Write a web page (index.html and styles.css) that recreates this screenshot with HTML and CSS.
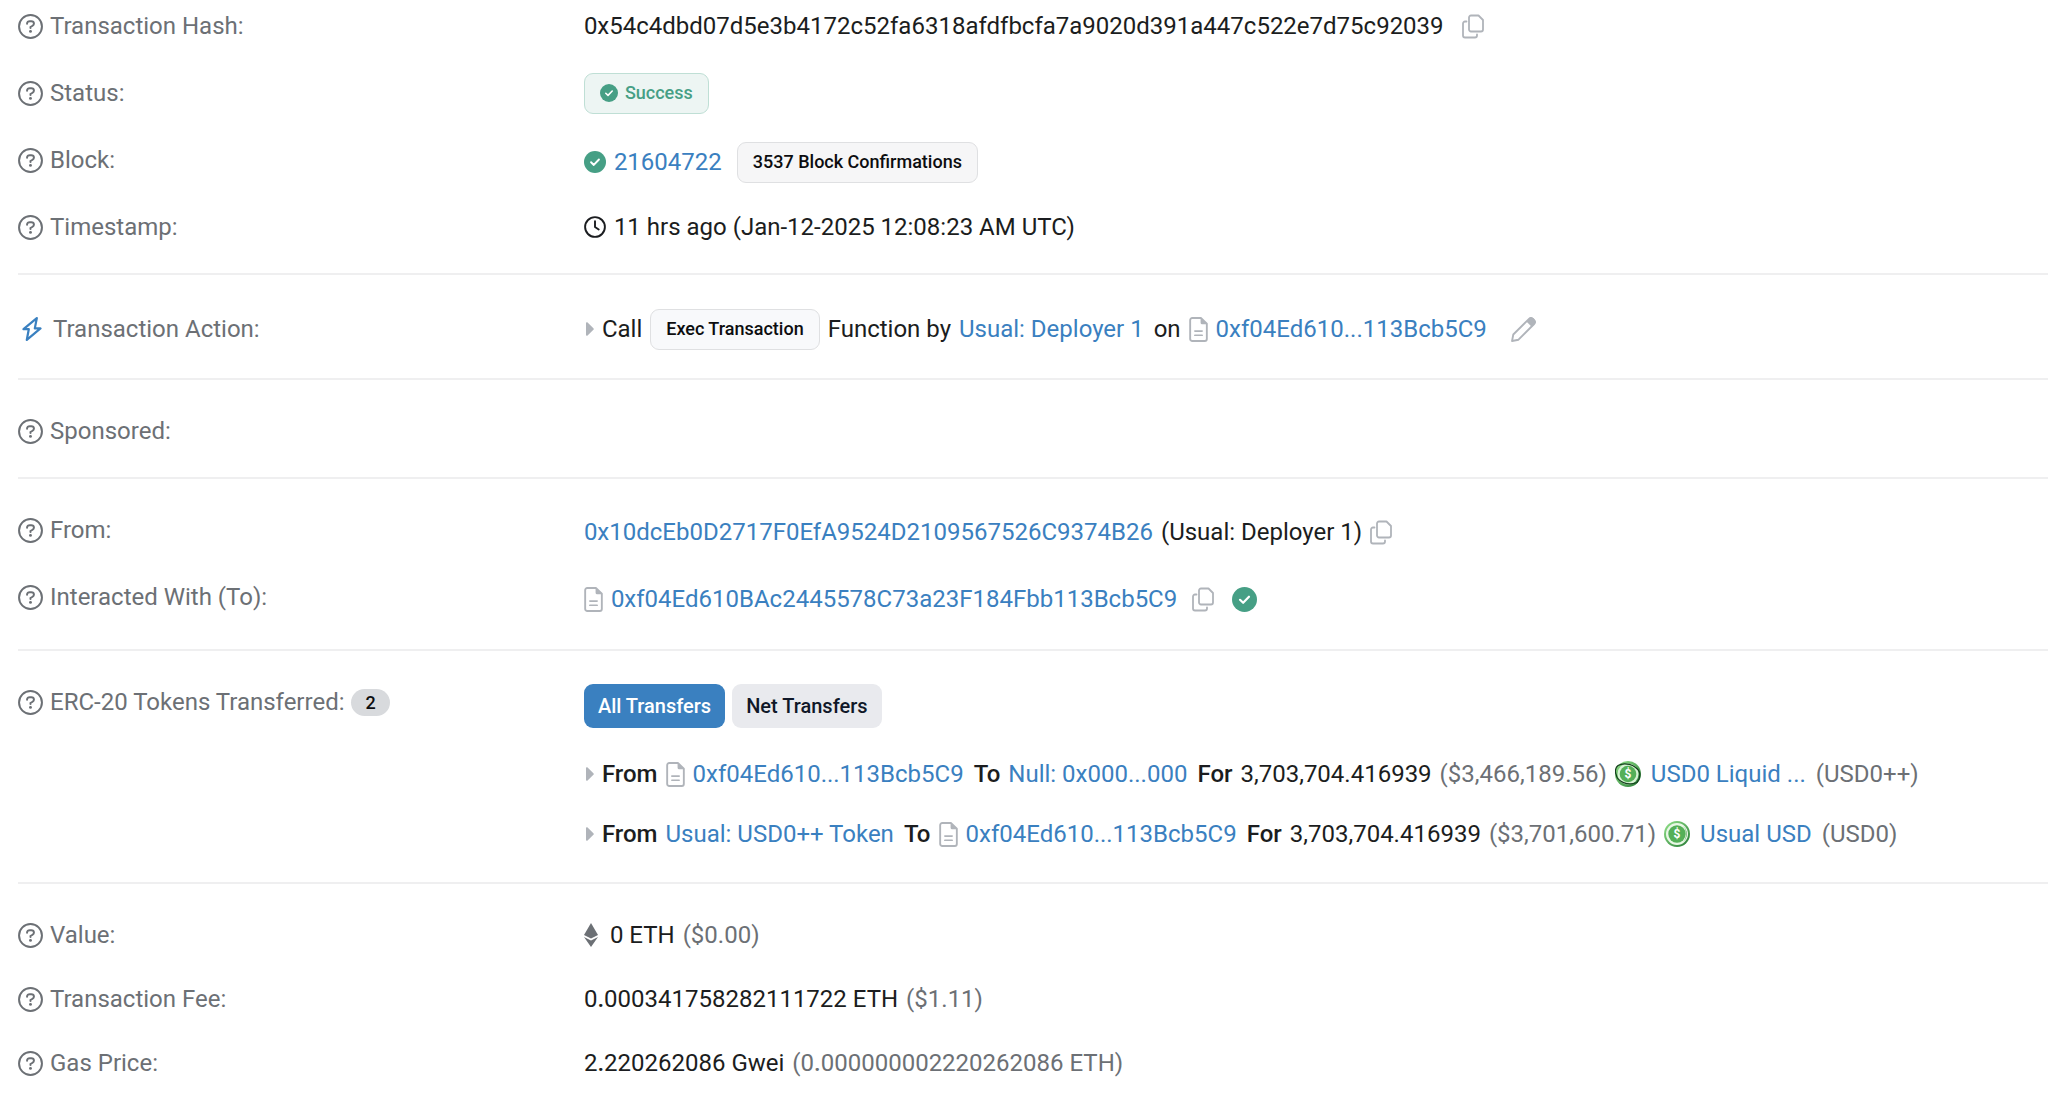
FILE: index.html
```html
<!DOCTYPE html>
<html lang="en">
<head>
<meta charset="utf-8">
<meta name="viewport" content="width=device-width, initial-scale=1">
<title>Transaction Details</title>
<link rel="stylesheet" href="styles.css">
</head>
<body>
<svg class="sprite" aria-hidden="true">
  <symbol id="help" viewBox="0 0 24 24"><circle cx="12" cy="12" r="11" fill="none" stroke="currentColor" stroke-width="1.9"/><path d="M8.7 9.3C8.7 7.6 9.8 6.9 11.3 6.9h1.4c1.5 0 2.6 1 2.6 2.3 0 1-.5 1.600-1.300 2.100L12 12.500v1" fill="none" stroke="currentColor" stroke-width="1.900" stroke-linecap="round"/><circle cx="12" cy="16.700" r="1.400" fill="currentColor"/></symbol>
  <symbol id="copy" viewBox="0 0 22 24"><path d="M9 1h7.500L21 5.500V15a2 2 0 0 1-2 2H9a2 2 0 0 1-2-2V3a2 2 0 0 1 2-2zM4.500 7H3a2 2 0 0 0-2 2v12a2 2 0 0 0 2 2h10a2 2 0 0 0 2-2v-1" fill="none" stroke="currentColor" stroke-width="1.800" stroke-linecap="round" stroke-linejoin="round"/></symbol>
  <symbol id="doc" viewBox="0 0 18 24"><path d="M3 1h8.500L17 6.500V21a2 2 0 0 1-2 2H3a2 2 0 0 1-2-2V3a2 2 0 0 1 2-2z" fill="none" stroke="currentColor" stroke-width="1.800" stroke-linejoin="round"/><path d="M11 1v4.500a1.500 1.500 0 0 0 1.500 1.500H17z" fill="currentColor"/><path d="M5.500 13.500h7M5.500 17.500h7" stroke="currentColor" stroke-width="1.600" stroke-linecap="round"/></symbol>
  <symbol id="check" viewBox="0 0 24 24"><circle cx="12" cy="12" r="12" fill="currentColor"/><path d="M7.700 12.300l3 2.900 5.600-5.900" fill="none" stroke="#fff" stroke-width="2.100" stroke-linecap="round" stroke-linejoin="round"/></symbol>
  <symbol id="clock" viewBox="0 0 22 22"><circle cx="11" cy="11" r="9.900" fill="none" stroke="currentColor" stroke-width="1.900"/><path d="M11 5.300V11l3.700 2.500" fill="none" stroke="currentColor" stroke-width="1.900" stroke-linecap="round" stroke-linejoin="round"/></symbol>
  <symbol id="bolt" viewBox="0 0 20 24"><path d="M14.800 1.200L1.500 12.200h5.300L4.800 22.800 18.500 11.400H12.800z" fill="none" stroke="currentColor" stroke-width="2.200" stroke-linejoin="round"/></symbol>
  <symbol id="caret" viewBox="0 0 8 14"><path d="M0 1.200v11.600c0 .9 1 1.300 1.600.7l5.800-5.700a1.100 1.100 0 0 0 0-1.600L1.600.5C1 -.1 0 .3 0 1.200z" fill="currentColor"/></symbol>
  <symbol id="pencil" viewBox="0 0 24 24"><path d="M1 23l1.200-6.200L17.300 1.800a2.500 2.500 0 0 1 3.500 0l1.400 1.400a2.500 2.500 0 0 1 0 3.500L7.200 21.800z" fill="none" stroke="currentColor" stroke-width="1.800" stroke-linejoin="round"/><path d="M14.800 4.300l3-3a3 3 0 0 1 4 0l1 1a3 3 0 0 1 0 4l-3 3z" fill="currentColor"/></symbol>
  <symbol id="eth" viewBox="0 0 14 24"><path d="M7 0l7 12.100-7 3.300-7-3.300z" fill="currentColor"/><path d="M0 14l7 3.400L14 14 7 24z" fill="currentColor"/></symbol>
  <linearGradient id="mint" x1="0" y1="0" x2="1" y2="1"><stop offset="0" stop-color="#93e48a"/><stop offset="1" stop-color="#267a35"/></linearGradient>
</svg>

<main class="details">
  <dl class="section">
    <div class="row">
      <dt><svg class="i-25"><use href="#help"/></svg>Transaction Hash:</dt>
      <dd><span>0x54c4dbd07d5e3b4172c52fa6318afdfbcfa7a9020d391a447c522e7d75c92039</span>
        <button class="icon-btn spaced" aria-label="Copy hash"><svg class="i-copy"><use href="#copy"/></svg></button></dd>
    </div>
    <div class="row">
      <dt><svg class="i-25"><use href="#help"/></svg>Status:</dt>
      <dd><span class="badge badge-success"><svg class="i-18"><use href="#check"/></svg>Success</span></dd>
    </div>
    <div class="row">
      <dt><svg class="i-25"><use href="#help"/></svg>Block:</dt>
      <dd class="low"><svg class="i-22 green"><use href="#check"/></svg><a href="#block">21604722</a>
        <span class="badge spaced-sm">3537 Block Confirmations</span></dd>
    </div>
    <div class="row">
      <dt><svg class="i-25"><use href="#help"/></svg>Timestamp:</dt>
      <dd><svg class="i-22"><use href="#clock"/></svg><span>11 hrs ago (Jan-12-2025 12:08:23 AM UTC)</span></dd>
    </div>
  </dl>

  <dl class="section section-action">
    <div class="row">
      <dt><svg class="i-bolt"><use href="#bolt"/></svg>Transaction Action:</dt>
      <dd><svg class="i-caret"><use href="#caret"/></svg><span>Call</span>
        <span class="badge badge-method">Exec Transaction</span>
        <span>Function by</span>
        <a href="#deployer">Usual: Deployer 1</a>
        <span class="word">on</span>
        <svg class="i-doc"><use href="#doc"/></svg><a href="#contract">0xf04Ed610...113Bcb5C9</a>
        <button class="icon-btn spaced-lg" aria-label="Edit note"><svg class="i-25"><use href="#pencil"/></svg></button></dd>
    </div>
  </dl>

  <dl class="section">
    <div class="row">
      <dt><svg class="i-25"><use href="#help"/></svg>Sponsored:</dt>
      <dd></dd>
    </div>
  </dl>

  <dl class="section section-parties">
    <div class="row">
      <dt><svg class="i-25"><use href="#help"/></svg>From:</dt>
      <dd class="low"><a href="#from">0x10dcEb0D2717F0EfA9524D2109567526C9374B26</a>
        <span>(Usual: Deployer 1)</span>
        <button class="icon-btn" aria-label="Copy sender"><svg class="i-copy"><use href="#copy"/></svg></button></dd>
    </div>
    <div class="row">
      <dt><svg class="i-25"><use href="#help"/></svg>Interacted With (To):</dt>
      <dd class="low"><svg class="i-doc"><use href="#doc"/></svg><a href="#to">0xf04Ed610BAc2445578C73a23F184Fbb113Bcb5C9</a>
        <button class="icon-btn spaced-sm" aria-label="Copy recipient"><svg class="i-copy"><use href="#copy"/></svg></button>
        <svg class="i-25 green spaced"><use href="#check"/></svg></dd>
    </div>
  </dl>

  <dl class="section section-tokens">
    <div class="row">
      <dt><svg class="i-25"><use href="#help"/></svg>ERC-20 Tokens Transferred:<span class="count">2</span></dt>
      <dd class="stack">
        <div class="tabs">
          <button class="tab tab-active">All Transfers</button>
          <button class="tab">Net Transfers</button>
        </div>
        <div class="transfer">
          <svg class="i-caret"><use href="#caret"/></svg><b>From</b>
          <svg class="i-doc"><use href="#doc"/></svg><a href="#contract">0xf04Ed610...113Bcb5C9</a>
          <b>To</b> <a href="#null">Null: 0x000...000</a>
          <b>For</b> <span>3,703,704.416939</span> <span class="muted">($3,466,189.56)</span>
          <svg class="i-coin" viewBox="0 0 26 26"><circle cx="13" cy="13" r="13" fill="url(#mint)"/><circle cx="13" cy="13" r="10.500" fill="#d9f3d5"/><circle cx="13" cy="13" r="8.300" fill="#55b058"/><path d="M3 4.500C9 1 20 3 24.500 11M1 13c1 8 12 12 21 8.500M24.500 11c1 4-.5 8-2.500 10.500M3 4.500C0 7 0 11 1 13" fill="none" stroke="#16401e" stroke-width="1.300"/><text x="13" y="17" class="coin-sign">$</text></svg>
          <a href="#usd0pp-token">USD0 Liquid ...</a> <span class="muted">(USD0++)</span>
        </div>
        <div class="transfer">
          <svg class="i-caret"><use href="#caret"/></svg><b>From</b>
          <a href="#usd0pp-token">Usual: USD0++ Token</a>
          <b>To</b> <svg class="i-doc"><use href="#doc"/></svg><a href="#contract">0xf04Ed610...113Bcb5C9</a>
          <b>For</b> <span>3,703,704.416939</span> <span class="muted">($3,701,600.71)</span>
          <svg class="i-coin" viewBox="0 0 26 26"><circle cx="13" cy="13" r="13" fill="url(#mint)"/><circle cx="13" cy="13" r="11" fill="#e9f8e6"/><circle cx="13" cy="13" r="8.700" fill="#55b058"/><path d="M19 4.800a10.800 10.800 0 0 1 0 16.400 12 12 0 0 0 0-16.400z" fill="#3c9145"/><text x="13" y="17" class="coin-sign">$</text></svg>
          <a href="#usd0-token">Usual USD</a> <span class="muted">(USD0)</span>
        </div>
      </dd>
    </div>
  </dl>

  <dl class="section section-fees">
    <div class="row">
      <dt><svg class="i-25"><use href="#help"/></svg>Value:</dt>
      <dd><svg class="i-eth muted"><use href="#eth"/></svg><span>0 ETH</span> <span class="muted">($0.00)</span></dd>
    </div>
    <div class="row">
      <dt><svg class="i-25"><use href="#help"/></svg>Transaction Fee:</dt>
      <dd><span>0<b>.</b>000341758282111722 ETH</span> <span class="muted">($1.11)</span></dd>
    </div>
    <div class="row">
      <dt><svg class="i-25"><use href="#help"/></svg>Gas Price:</dt>
      <dd><span>2<b>.</b>220262086 Gwei</span> <span class="muted">(0<b>.</b>000000002220262086 ETH)</span></dd>
    </div>
  </dl>
</main>
</body>
</html>
```
FILE: styles.css
```css
:root {
  --text: #1b1d20;
  --muted: #6c7075;
  --link: #3a80c0;
  --green: #469f85;
  --faint: #b0b4ba;
  --line: #efeff0;
}

* { box-sizing: border-box; }

body {
  margin: 0;
  background: #fff;
  color: var(--text);
  font: 24px/42px Roboto, "Liberation Sans", sans-serif;
}

.sprite { position: absolute; width: 0; height: 0; }

.details { padding: 5px 0 0 18px; }

a { color: var(--link); text-decoration: none; }
b { font-weight: 500; }
svg { flex: none; }

.section { margin: 0; padding-top: 30px; }
.section:first-child { padding-top: 0; }
.section:not(:last-child) { border-bottom: 2px solid var(--line); }
.section-action { padding: 33px 0 3px; }
.section-parties { padding-bottom: 6px; }

.row {
  display: grid;
  grid-template-columns: 5fr 13fr;
  align-items: start;
  min-height: 67px;
}
.section-fees .row { min-height: 64px; }

dt, dd, .transfer {
  display: flex;
  align-items: center;
  min-height: 42px;
  white-space: nowrap;
}
dt { gap: 7px; color: var(--muted); }
dd { gap: 8px; margin: 0; padding-left: 2px; }
.low { padding-top: 2px; }

.muted { color: var(--muted); }
.green { color: var(--green); }
.spaced { margin-left: 10px; }
.spaced-sm { margin-left: 7px; }
.spaced-lg { margin-left: 16px; }
.word { margin-left: 2px; }

.i-18 { width: 18px; height: 18px; }
.i-22 { width: 22px; height: 22px; }
.i-25 { width: 25px; height: 25px; }
.i-bolt { width: 20px; height: 24px; margin: 0 4px; color: var(--link); }
.i-copy { width: 22px; height: 25px; }
.i-doc { width: 19px; height: 25px; color: var(--faint); }
.i-caret { width: 8px; height: 14px; margin-left: 2px; color: var(--faint); }
.i-coin { width: 26px; height: 26px; margin-right: 2px; }
.i-eth { width: 14px; height: 24px; margin-right: 4px; }

.coin-sign {
  fill: #fff;
  font: 700 12px Roboto, sans-serif;
  text-anchor: middle;
}

button { border: 0; font: inherit; cursor: pointer; }
.icon-btn {
  display: flex;
  padding: 0;
  background: none;
  color: var(--faint);
}

.badge {
  display: flex;
  align-items: center;
  gap: 7px;
  height: 41px;
  padding: 0 15px;
  border: 1px solid #dfe0e2;
  border-radius: 9px;
  background: #f6f6f7;
  color: #0c0d0f;
  font-size: 18px;
  font-weight: 500;
}
.badge-success {
  border-color: #bfdfd5;
  background: #edf5f3;
  color: var(--green);
}
.badge-method { background: #f8f9fb; }

.count {
  padding: 0 14px;
  border-radius: 14px;
  background: #d8dadd;
  color: #0c0d0f;
  font-size: 18px;
  font-weight: 500;
  line-height: 27px;
}

.stack {
  flex-direction: column;
  align-items: flex-start;
  gap: 0;
  padding-top: 3px;
}
.tabs { display: flex; gap: 7px; margin-bottom: 16px; }
.tab {
  height: 44px;
  padding: 0 14px;
  border-radius: 9px;
  background: #e9eaee;
  color: #101828;
  font-size: 20px;
  font-weight: 500;
}
.tab-active { background: #3a80c0; color: #fff; }

.transfer { gap: 8px; min-height: 60px; }
.transfer a { margin-right: 2px; }
.section-tokens { padding-bottom: 18px; }
```
